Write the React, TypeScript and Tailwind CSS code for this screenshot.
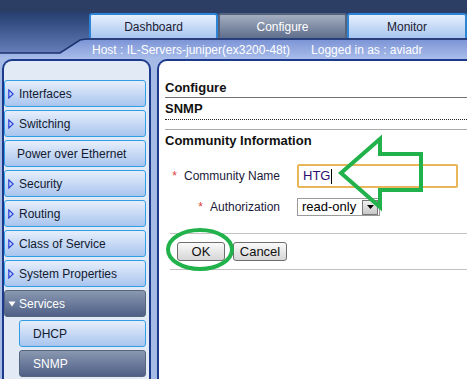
const font = { fontFamily: '"Liberation Sans", Arial, sans-serif' }

const Tri = ({ open }: { open?: boolean }) =>
  open ? (
    <svg width="8" height="6" viewBox="0 0 8 6" className="mr-[3px]">
      <polygon points="0.5,0.5 7.5,0.5 4,5.5" fill="#ffffff" />
    </svg>
  ) : (
    <svg width="6" height="10" viewBox="0 0 6 10" className="mr-[5px]">
      <polygon points="0.8,1 5.2,5 0.8,9" fill="none" stroke="#2a3fd8" strokeWidth="1.2" />
    </svg>
  )

const Item = ({ label, arrow, active, sub }: any) => (
  <div
    className={
      'flex h-[27px] items-center rounded-[3px] border text-[12px] ' +
      (sub ? 'ml-[15px] pl-[13px] ' : arrow === undefined ? 'pl-[12px] ' : 'pl-[3px] ') +
      (active
        ? 'border-[#56657e] bg-gradient-to-b from-[#8a98b0] to-[#4f6087] text-white'
        : 'border-[#2f9ee6] bg-gradient-to-b from-[#e6eefb] to-[#a9c5ee] text-[#121a30]')
    }
  >
    {arrow !== undefined && <Tri open={arrow === 'open'} />}
    <span>{label}</span>
  </div>
)

const Tab = ({ label, active, w }: any) => (
  <div
    className={
      'flex h-[25px] items-center justify-center rounded-t-[3px] border-x-2 border-t-2 text-[12px] ' +
      w +
      (active
        ? ' border-[#55647c] bg-gradient-to-b from-[#a3aec0] to-[#5f6e8c] text-white'
        : ' border-[#2d83d4] bg-gradient-to-b from-[#e6effc] to-[#a8c6f0] text-[#1a1a30]')
    }
  >
    {label}
  </div>
)

export default function App() {
  return (
    <div className="relative h-[379px] w-[467px] overflow-hidden bg-[#a6bae6]" style={font}>
      {/* header */}
      <div className="h-[12px] bg-[#2d3e64]" />
      <div className="bg-gradient-to-b from-[#263f6f] to-[#6f88c6]">
        <div className="flex pl-[89px] pt-[1px]">
          <Tab label="Dashboard" w="w-[129px]" />
          <Tab label="Configure" w="w-[129px]" active />
          <Tab label="Monitor" w="flex-1" />
        </div>
        <div className="relative h-[21px]">
          <svg className="absolute inset-0" width="467" height="21" viewBox="0 0 467 21">
            <defs>
              <linearGradient id="band" x1="0" y1="0" x2="0" y2="1">
                <stop offset="0" stopColor="#7d95d6" />
                <stop offset="1" stopColor="#a9bdea" />
              </linearGradient>
            </defs>
            <polygon points="0,15 60,15 80,2 467,2 467,21 0,21" fill="url(#band)" />
            <polyline points="0,15 60,15 80,2 86,1 467,1" fill="none" stroke="#1c3370" strokeWidth="1.5" />
          </svg>
          <div className="relative flex h-full items-center pt-[2px] text-[12px] text-white">
            <span className="ml-[92px]">Host : IL-Servers-juniper(ex3200-48t)</span>
            <span className="ml-[21px]">Logged in as : aviadr</span>
          </div>
        </div>
      </div>

      {/* panels */}
      <div className="flex h-[320px]">
        <div className="ml-[2px] flex w-[149px] flex-col gap-[3px] rounded-t-[10px] border-x-2 border-t-2 border-[#1b3a8c] bg-[#e2eaf6] pr-[3px] pt-[19px]">
          <Item label="Interfaces" arrow="closed" />
          <Item label="Switching" arrow="closed" />
          <Item label="Power over Ethernet" />
          <Item label="Security" arrow="closed" />
          <Item label="Routing" arrow="closed" />
          <Item label="Class of Service" arrow="closed" />
          <Item label="System Properties" arrow="closed" />
          <Item label="Services" arrow="open" active />
          <Item label="DHCP" sub />
          <Item label="SNMP" sub active />
        </div>

        <div className="ml-[6px] flex-1 rounded-tl-[10px] border-l-2 border-t-2 border-[#1b3a8c] bg-white pl-[6px] pt-[17px] text-[#111]">
          <div className="flex h-[20px] items-center border-b border-[#707070] text-[13px] font-bold">Configure</div>
          <div className="flex h-[22px] items-center border-b border-dotted border-[#222] text-[13px] font-bold">SNMP</div>
          <div className="mt-[9px] border-t border-[#a9a9a9]" />
          <div className="flex h-[21px] items-center text-[13px] font-bold">Community Information</div>

          <div className="mt-[13px] flex h-[24px] items-center">
            <div className="flex w-[115px] justify-end text-[12px] text-[#1a1a3a]">
              <span className="mr-[7px] text-[#e0403a]">*</span>Community Name
            </div>
            <div className="ml-[17px] flex h-[24px] w-[161px] items-center rounded-[2px] border-2 border-[#e9b65a] pl-[4px] text-[13px] text-[#2c0f6e]">
              HTG<span className="ml-[1px] h-[15px] w-[1px] bg-black" />
            </div>
          </div>

          <div className="mt-[10px] flex h-[18px] items-center">
            <div className="flex w-[115px] justify-end text-[12px] text-[#1a1a3a]">
              <span className="mr-[7px] text-[#e0403a]">*</span>Authorization
            </div>
            <div className="ml-[17px] flex h-[18px] w-[83px] items-center justify-between border border-[#9a9a9a] pl-[4px] text-[13px] text-black">
              read-only
              <div className="mr-[1px] flex h-[15px] w-[16px] items-center justify-center border border-[#777] bg-gradient-to-b from-[#f0f0f0] to-[#c8c8c8]">
                <svg width="7" height="4" viewBox="0 0 7 4">
                  <polygon points="0,0 7,0 3.5,4" fill="#000" />
                </svg>
              </div>
            </div>
          </div>

          <div className="ml-[5px] mt-[17px] border-t border-[#c2c2c2]" />
          <div className="ml-[12px] mt-[8px] flex gap-[8px]">
            <div className="flex h-[19px] w-[48px] items-center justify-center rounded-[3px] border border-[#6e6e6e] bg-gradient-to-b from-[#fafafa] to-[#d6d6d6] text-[13px]">
              OK
            </div>
            <div className="flex h-[19px] w-[54px] items-center justify-center rounded-[3px] border border-[#6e6e6e] bg-gradient-to-b from-[#fafafa] to-[#d6d6d6] text-[13px]">
              Cancel
            </div>
          </div>
          <div className="ml-[5px] mt-[8px] border-t border-[#c2c2c2]" />
        </div>
      </div>

      {/* green annotations */}
      <svg className="pointer-events-none absolute left-0 top-0" width="467" height="379" viewBox="0 0 467 379">
        <polygon
          points="380,139 380,154 421,154 421,190 380,190 380,207 341,173"
          fill="none"
          stroke="#22b24c"
          strokeWidth="4"
          strokeLinejoin="miter"
        />
        <ellipse cx="200" cy="249.5" rx="32" ry="19.5" fill="none" stroke="#22b24c" strokeWidth="4" />
      </svg>
    </div>
  )
}
